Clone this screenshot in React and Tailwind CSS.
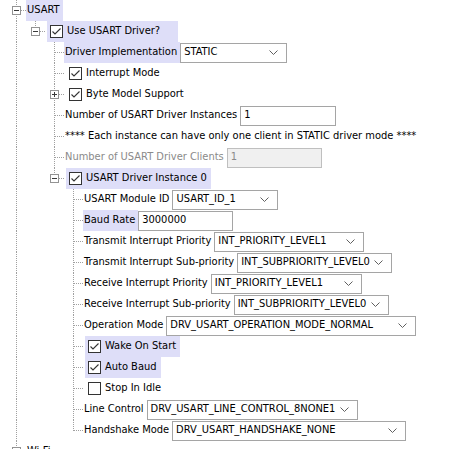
import React from "react";

const LINE = "#a0a0a0";

function Guide({ show }) {
  return (
    <svg width="19" height="21" className="block shrink-0">
      {show && <line x1="9.5" y1="0" x2="9.5" y2="21" stroke={LINE} strokeDasharray="1 1" />}
    </svg>
  );
}

function Connector({ last, exp }) {
  return (
    <svg width="19" height="21" className="block shrink-0">
      <line x1="9.5" y1="0" x2="9.5" y2={last ? 11 : 21} stroke={LINE} strokeDasharray="1 1" />
      <line x1="10" y1="10.5" x2="19" y2="10.5" stroke={LINE} strokeDasharray="1 1" />
      {exp && (
        <>
          <rect x="5.5" y="6.5" width="8" height="8" fill="white" stroke="#939393" />
          <line x1="7" y1="10.5" x2="12" y2="10.5" stroke="#3a3a3a" />
          {exp === "plus" && <line x1="9.5" y1="8" x2="9.5" y2="13" stroke="#3a3a3a" />}
        </>
      )}
    </svg>
  );
}

function Check({ checked }) {
  return (
    <span className="flex h-[13px] w-[13px] shrink-0 items-center justify-center border border-[#333333] bg-white">
      {checked && (
        <svg width="11" height="11" viewBox="0 0 11 11" className="block">
          <polyline points="1.5,5.5 4,8 9.5,2.5" fill="none" stroke="#333333" strokeWidth="1.1" />
        </svg>
      )}
    </span>
  );
}

function Chevron() {
  return (
    <svg width="9" height="5" viewBox="0 0 9 5" className="block shrink-0">
      <polyline points="0.5,0.5 4.5,4.5 8.5,0.5" fill="none" stroke="#606060" strokeWidth="1" />
    </svg>
  );
}

function Combo({ value, w }) {
  return (
    <span className={`flex h-[20px] shrink-0 items-center justify-between border border-[#a5a5a5] bg-white pl-[3px] pr-[8px] ${w}`}>
      <span>{value}</span>
      <Chevron />
    </span>
  );
}

function Input({ value, w, disabled }) {
  return (
    <span
      className={`flex h-[20px] shrink-0 items-center border px-[3px] ${w} ${
        disabled ? "border-[#bfbfbf] bg-[#f0f0f0] text-[#8a8a8a]" : "border-[#a5a5a5] bg-white"
      }`}
    >
      {value}
    </span>
  );
}

const T = true;
const F = false;

const rows = [
  { g: [], last: F, exp: "minus", kind: "label", text: "USART", hl: T },
  { g: [T], last: T, exp: "minus", kind: "check", checked: T, text: "Use USART Driver?", hl: T, pad: "pr-[18px]" },
  { g: [T, F], kind: "label", text: "Driver Implementation", hl: T, combo: { value: "STATIC", w: "w-[107px]" } },
  { g: [T, F], kind: "check", checked: T, text: "Interrupt Mode" },
  { g: [T, F], exp: "plus", kind: "check", checked: T, text: "Byte Model Support" },
  { g: [T, F], kind: "label", text: "Number of USART Driver Instances", input: { value: "1", w: "w-[96px]" } },
  { g: [T, F], kind: "label", text: "**** Each instance can have only one client in STATIC driver mode ****" },
  { g: [T, F], kind: "label", text: "Number of USART Driver Clients", disabled: T, input: { value: "1", w: "w-[95px]", disabled: T } },
  { g: [T, F], last: T, exp: "minus", kind: "check", checked: T, text: "USART Driver Instance 0", hl: T },
  { g: [T, F, F], kind: "label", text: "USART Module ID", combo: { value: "USART_ID_1", w: "w-[106px]" } },
  { g: [T, F, F], kind: "label", text: "Baud Rate", hl: T, input: { value: "3000000", w: "w-[95px]" } },
  { g: [T, F, F], kind: "label", text: "Transmit Interrupt Priority", combo: { value: "INT_PRIORITY_LEVEL1", w: "w-[150px]" } },
  { g: [T, F, F], kind: "label", text: "Transmit Interrupt Sub-priority", combo: { value: "INT_SUBPRIORITY_LEVEL0", w: "w-[155px]" } },
  { g: [T, F, F], kind: "label", text: "Receive Interrupt Priority", combo: { value: "INT_PRIORITY_LEVEL1", w: "w-[151px]" } },
  { g: [T, F, F], kind: "label", text: "Receive Interrupt Sub-priority", combo: { value: "INT_SUBPRIORITY_LEVEL0", w: "w-[155px]" } },
  { g: [T, F, F], kind: "label", text: "Operation Mode", combo: { value: "DRV_USART_OPERATION_MODE_NORMAL", w: "w-[250px]" } },
  { g: [T, F, F], kind: "check", checked: T, text: "Wake On Start", hl: T },
  { g: [T, F, F], kind: "check", checked: T, text: "Auto Baud", hl: T },
  { g: [T, F, F], kind: "check", checked: F, text: "Stop In Idle" },
  { g: [T, F, F], kind: "label", text: "Line Control", combo: { value: "DRV_USART_LINE_CONTROL_8NONE1", w: "w-[211px]" } },
  { g: [T, F, F], last: T, kind: "label", text: "Handshake Mode", combo: { value: "DRV_USART_HANDSHAKE_NONE", w: "w-[234px]" } },
  { g: [], last: F, exp: "plus", kind: "label", text: "Wi-Fi" },
];

function Row({ r }) {
  return (
    <div className="flex h-[21px] items-center pl-[7px]">
      {r.g.map((s, i) => (
        <Guide key={i} show={s} />
      ))}
      <Connector last={r.last} exp={r.exp} />
      {r.kind === "check" ? (
        <span className={`ml-[2px] flex h-[21px] items-center gap-[4px] pl-[3px] ${r.pad || "pr-[4px]"} ${r.hl ? "bg-[#dedef8]" : ""}`}>
          <Check checked={r.checked} />
          <span>{r.text}</span>
        </span>
      ) : (
        <span className={`flex h-[21px] items-center pl-[1px] pr-[3px] ${r.hl ? "bg-[#dedef8]" : ""} ${r.disabled ? "text-[#8a8a8a]" : ""}`}>
          {r.text}
        </span>
      )}
      {r.combo && <Combo {...r.combo} />}
      {r.input && <Input {...r.input} />}
    </div>
  );
}

export default function App() {
  return (
    <div
      className="h-[449px] w-[462px] overflow-hidden whitespace-nowrap bg-white text-[11px] text-black"
      style={{ fontFamily: '"DejaVu Sans Condensed", "Liberation Sans", sans-serif' }}
    >
      {rows.map((r, i) => (
        <Row key={i} r={r} />
      ))}
    </div>
  );
}
